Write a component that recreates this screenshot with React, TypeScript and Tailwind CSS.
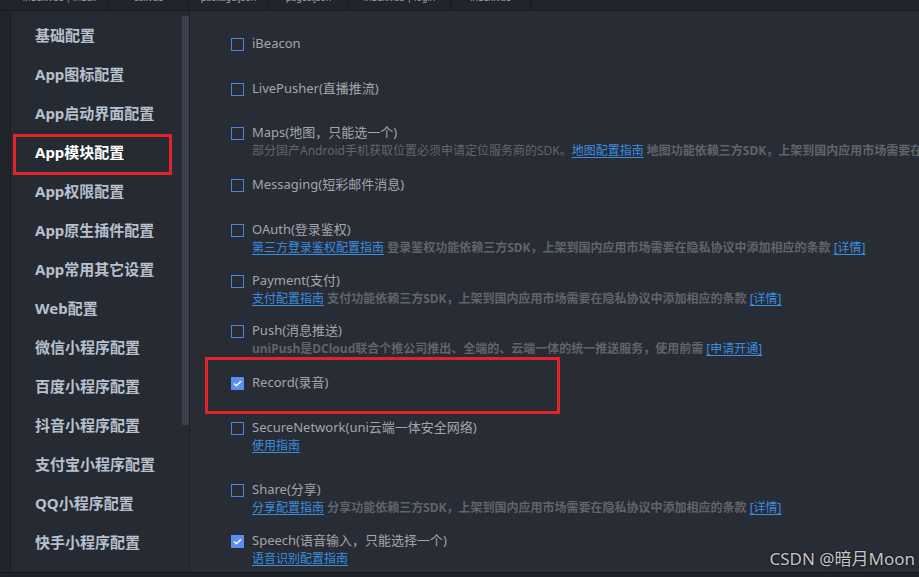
import React from "react";

const font = { fontFamily: '"Noto Sans", "Noto Sans CJK SC", sans-serif' };

const tabs = [
  { w: "w-[98px]", label: "index.vue | index" },
  { w: "w-[80px]", label: "cal.vue" },
  { w: "w-[80px]", label: "package.json" },
  { w: "w-[80px]", label: "pages.json" },
  { w: "w-[102px]", label: "index.vue | login" },
  { w: "w-[80px]", label: "index.vue" },
];

const menu = [
  "基础配置",
  "App图标配置",
  "App启动界面配置",
  "App模块配置",
  "App权限配置",
  "App原生插件配置",
  "App常用其它设置",
  "Web配置",
  "微信小程序配置",
  "百度小程序配置",
  "抖音小程序配置",
  "支付宝小程序配置",
  "QQ小程序配置",
  "快手小程序配置",
];

const Link = ({ children }: { children: React.ReactNode }) => (
  <span className="text-[#3a8ee0] underline underline-offset-2">{children}</span>
);

const Note = ({ children }: { children: React.ReactNode }) => (
  <span className="font-bold text-[#60646b]">{children}</span>
);

type Mod = {
  label: string;
  h: string;
  checked?: boolean;
  boxed?: boolean;
  sub?: React.ReactNode;
};

const modules: Mod[] = [
  { label: "iBeacon", h: "h-[45px]" },
  { label: "LivePusher(直播推流)", h: "h-[44px]" },
  {
    label: "Maps(地图，只能选一个)",
    h: "h-[52px]",
    sub: (
      <>
        部分国产Android手机获取位置必须申请定位服务商的SDK。<Link>地图配置指南</Link>{" "}
        <Note>地图功能依赖三方SDK，上架到国内应用市场需要在隐私协议中添加相应的条款</Note>
      </>
    ),
  },
  { label: "Messaging(短彩邮件消息)", h: "h-[45px]" },
  {
    label: "OAuth(登录鉴权)",
    h: "h-[51px]",
    sub: (
      <>
        <Link>第三方登录鉴权配置指南</Link>{" "}
        <Note>登录鉴权功能依赖三方SDK，上架到国内应用市场需要在隐私协议中添加相应的条款</Note>{" "}
        <Link>[详情]</Link>
      </>
    ),
  },
  {
    label: "Payment(支付)",
    h: "h-[50px]",
    sub: (
      <>
        <Link>支付配置指南</Link>{" "}
        <Note>支付功能依赖三方SDK，上架到国内应用市场需要在隐私协议中添加相应的条款</Note>{" "}
        <Link>[详情]</Link>
      </>
    ),
  },
  {
    label: "Push(消息推送)",
    h: "h-[52px]",
    sub: (
      <>
        <Note>uniPush是DCloud联合个推公司推出、全端的、云端一体的统一推送服务，使用前需</Note>{" "}
        <Link>[申请开通]</Link>
      </>
    ),
  },
  { label: "Record(录音)", h: "h-[45px]", checked: true, boxed: true },
  {
    label: "SecureNetwork(uni云端一体安全网络)",
    h: "h-[62px]",
    sub: <Link>使用指南</Link>,
  },
  {
    label: "Share(分享)",
    h: "h-[51px]",
    sub: (
      <>
        <Link>分享配置指南</Link>{" "}
        <Note>分享功能依赖三方SDK，上架到国内应用市场需要在隐私协议中添加相应的条款</Note>{" "}
        <Link>[详情]</Link>
      </>
    ),
  },
  {
    label: "Speech(语音输入，只能选择一个)",
    h: "h-[40px]",
    checked: true,
    sub: <Link>语音识别配置指南</Link>,
  },
];

const Checkbox = ({ checked }: { checked?: boolean }) =>
  checked ? (
    <span className="w-[13px] h-[13px] bg-[#5a8ef0] flex items-center justify-center shrink-0">
      <svg width="9" height="7" viewBox="0 0 9 7" fill="none">
        <path d="M1 3.6 L3.4 5.8 L8 1.2" stroke="white" strokeWidth="1.4" />
      </svg>
    </span>
  ) : (
    <span className="w-[13px] h-[13px] border border-[#4d83dc] shrink-0" />
  );

export default function App() {
  return (
    <div
      className="w-[919px] h-[577px] bg-[#21252b] flex flex-col overflow-hidden relative"
      style={font}
    >
      {/* tab strip, cut off at the top */}
      <div className="h-[11px] shrink-0 flex pl-[11px] border-b border-[#181a1f] overflow-hidden">
        {tabs.map((t, i) => (
          <div
            key={i}
            className={`${t.w} shrink-0 border-r border-[#181a1f] flex justify-center overflow-hidden`}
          >
            <span className="text-[9px] leading-[12px] mt-[-8px] text-[#9ea6b4] whitespace-nowrap">
              {t.label}
            </span>
          </div>
        ))}
      </div>

      <div className="flex flex-1 min-h-0">
        <div className="w-[11px] shrink-0 bg-[#21252b] border-r border-[#1b1e23]" />

        {/* settings menu */}
        <aside className="w-[171px] shrink-0 bg-[#262a32] pt-[5px] pl-[24px]">
          {menu.map((m, i) => (
            <div key={m} className="h-[39px] flex items-center relative">
              <span
                className={`text-[15px] font-bold whitespace-nowrap ${
                  i === 3 ? "text-white" : "text-[#b6c0cf]"
                }`}
              >
                {m}
              </span>
              {i === 3 && (
                <div className="absolute left-[-22px] top-[1px] w-[159px] h-[41px] border-[3px] border-[#e3222b]" />
              )}
            </div>
          ))}
        </aside>
        <div className="w-[8px] shrink-0 bg-[#262a32] pt-[5px] border-r border-[#1d2026]">
          <div className="h-[409px] bg-[#3a3f4a]" />
        </div>

        {/* module list */}
        <main className="flex-1 min-w-0 bg-[#282c34] pt-[24px] pl-[41px] overflow-hidden">
          {modules.map((m) => (
            <div key={m.label} className={`${m.h} relative`}>
              <div className="h-[18px] flex items-center gap-2">
                <Checkbox checked={m.checked} />
                <span className="text-[13px] text-[#a3a6ad] whitespace-nowrap">{m.label}</span>
              </div>
              {m.sub && (
                <div className="pl-[21px] text-[12px] leading-[17px] text-[#62666d] whitespace-nowrap">
                  {m.sub}
                </div>
              )}
              {m.boxed && (
                <div className="absolute left-[-26px] top-[-17px] w-[355px] h-[57px] border-[3px] border-[#e3222b]" />
              )}
            </div>
          ))}
        </main>
      </div>

      <div className="h-[5px] shrink-0 bg-[#1e2127] border-t border-[#15171b]" />

      <div className="absolute right-[4px] bottom-[6px] text-[17px] text-[#c6c6c6] [text-shadow:0_0_2px_#000]">
        CSDN @暗月Moon
      </div>
    </div>
  );
}
